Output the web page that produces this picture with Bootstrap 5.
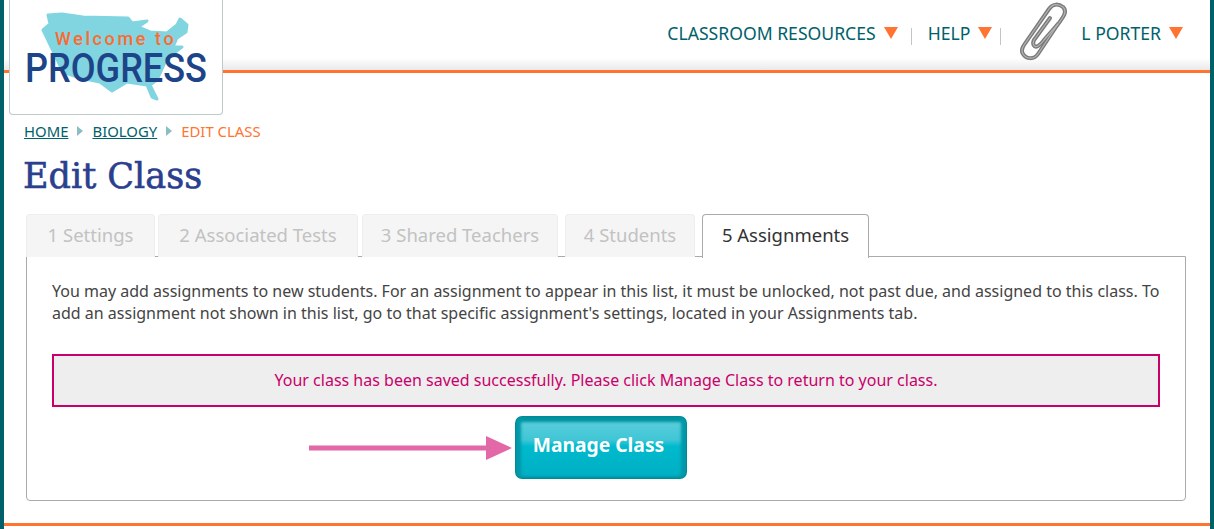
<!DOCTYPE html>
<html lang="en">
<head>
    <meta charset="UTF-8">
    <meta name="viewport" content="width=device-width, initial-scale=1.0">
    <title>Edit Class</title>
    <link href="https://cdn.jsdelivr.net/npm/bootstrap@5.3.0/dist/css/bootstrap.min.css" rel="stylesheet">
    <style>
        html, body { height: 529px; overflow: hidden; }
        body {
            background: #fff;
            font-family: "Noto Sans", "Open Sans", sans-serif;
            font-size: 16px;
            color: #444;
        }
        .page-frame {
            height: 529px;
            border-left: 4px solid #00616a;
            border-right: 4px solid #00616a;
            position: relative;
        }
        .top-bar {
            height: 73px;
            border-bottom: 3px solid #ff7431;
            background: linear-gradient(to bottom, #fff 0, #fff 58px, #e9e9e9 70px);
            padding: 0 27px 3px 0;
        }
        .top-link { color: #00616a; font-size: 17.6px; text-decoration: none; }
        .top-caret {
            width: 0; height: 0;
            margin: 0 13px 1px 8px;
            border-left: 7px solid transparent;
            border-right: 7px solid transparent;
            border-top: 12px solid #ff7431;
        }
        .top-caret.tight { margin-right: 8px; }
        .top-caret.last { margin-right: 0; }
        .top-sep { width: 1px; height: 17px; background: #c4c4c4; margin: 6px 16px 0 0; }
        .top-sep.before-clip { margin-right: 19px; }
        .clip-icon { margin-right: 14px; margin-bottom: 3px; }
        .logo-box {
            position: absolute;
            left: 5px; top: 0;
            width: 214px; height: 115px;
            background: #fff;
            border: 1px solid #bccaca;
            border-top: 0;
            border-radius: 0 0 4px 4px;
        }
        .crumb-row { padding: 48px 0 0 20px; font-size: 14.9px; line-height: 20px; gap: 9px; }
        .crumb-row a { color: #00616a; }
        .crumb-arrow {
            width: 0; height: 0;
            border-top: 5px solid transparent;
            border-bottom: 5px solid transparent;
            border-left: 6px solid #8bbec3;
        }
        .crumb-now { color: #ff7431; }
        .page-title {
            font-family: "DejaVu Serif", serif;
            font-size: 35px;
            line-height: 44px;
            color: #2a3f8d;
            margin: 13px 0 16px 19px;
            -webkit-text-stroke: 0.6px #2a3f8d;
        }
        .step-tabs { margin-left: 22px; margin-right: 24px; }
        .step-tab {
            height: 43px;
            line-height: 39px;
            font-size: 18.5px;
            text-align: center;
            background: #f5f5f5;
            color: #c2c2c2;
            border: 1px solid #eee;
            border-bottom: 0;
            border-radius: 4px 4px 0 0;
        }
        .step-tab:nth-child(1) { width: 129px; }
        .step-tab:nth-child(2) { width: 200px; margin-left: 3px; }
        .step-tab:nth-child(3) { width: 196px; margin-left: 4px; }
        .step-tab:nth-child(4) { width: 130px; margin-left: 7px; }
        .step-tab:nth-child(5) { width: 167px; margin-left: 7px; }
        .step-tab.is-on {
            background: #fff;
            color: #333;
            border-color: #aaa;
            position: relative;
            z-index: 1;
            margin-bottom: -1px;
            height: 44px;
        }
        .step-panel {
            margin: -1px 24px 0 22px;
            height: 245px;
            border: 1px solid #aaa;
            border-radius: 0 0 4px 4px;
            padding: 23px 25px 0 25px;
        }
        .step-panel p { line-height: 22px; margin: 0 0 30px; }
        .saved-note {
            height: 53px;
            line-height: 49px;
            text-align: center;
            background: #eee;
            border: 2px solid #c9006b;
            color: #c9006b;
        }
        .manage-row { margin: 9px 0 0 257px; }
        .manage-btn {
            width: 172px; height: 63px;
            font-size: 19.3px;
            font-weight: 700;
            color: #fff;
            border: 0;
            border-radius: 7px;
            background-image: linear-gradient(to bottom, #62d0dc 0, #3fc6d6 38%, #00bacd 48%, #00aec3 100%);
            box-shadow: inset 0 0 0 1px #008a96,
                inset 7px 0 3px -1px #0098a9,
                inset -7px 0 3px -1px #0098a9,
                inset 0 7px 3px -1px #00929f,
                inset 0 -3px 3px -1px #00899a;
            padding: 0 5px 4px 0;
        }
        .end-rule { height: 3px; background: #ff7431; margin-top: 22px; }
    </style>
</head>
<body>
    <div class="page-frame">
        <div class="top-bar d-flex justify-content-end align-items-center">
            <a class="top-link" href="#">CLASSROOM RESOURCES</a>
            <span class="top-caret"></span>
            <span class="top-sep"></span>
            <a class="top-link" href="#">HELP</a>
            <span class="top-caret tight"></span>
            <span class="top-sep before-clip"></span>
            <svg class="clip-icon" width="47" height="60" viewBox="0 0 47 60" fill="none" stroke-linecap="round" stroke-linejoin="round">
                <g stroke="#7b7b7b" stroke-width="4">
                    <path d="M38 22 L18 52 C14 58 6 57 3 52 C1 49 2 46 4 43 L29 7 C33 1 39 2 43 5 C46 8 45 12 43 15 L39 21"/>
                    <path d="M30 16 L14 38 C12 42 14 46 18 44 C20 43 22 41 24 38 L38 22"/>
                </g>
                <g stroke="#b4b4b4" stroke-width="1.2">
                    <path d="M38 22 L18 52 C14 58 6 57 3 52 C1 49 2 46 4 43 L29 7 C33 1 39 2 43 5 C46 8 45 12 43 15 L39 21"/>
                    <path d="M30 16 L14 38 C12 42 14 46 18 44 C20 43 22 41 24 38 L38 22"/>
                </g>
            </svg>
            <a class="top-link" href="#">L PORTER</a>
            <span class="top-caret last"></span>
        </div>

        <div class="logo-box">
            <svg width="212" height="113" viewBox="0 0 212 113">
                <path fill="#80d5e0" stroke="#80d5e0" stroke-width="3" stroke-linejoin="round" d="M38 15 L52 14 L73 17 L118 18 L122 23 L137 21 L128 27 L140 32 L157 33 L167 25 L170 19 L177 25 L176 32 L167 38 L163 47 L172 47 L157 58 L147 80 L140 85 L147 99 L142 97 L137 85 L117 82 L102 91 L90 82 L70 78 L53 72 L45 55 L33 30 L40 24 Z"/>
                <text x="45" y="45" font-family="Roboto, sans-serif" font-size="18" font-weight="500" letter-spacing="2.6" fill="#ff6a30">Welcome to</text>
                <text transform="translate(15 82) scale(0.88 1)" font-family="Roboto, sans-serif" font-size="41" font-weight="500" fill="#1d4488">PROGRESS</text>
            </svg>
        </div>

        <div class="crumb-row d-flex align-items-center">
            <a href="#">HOME</a><span class="crumb-arrow"></span>
            <a href="#">BIOLOGY</a><span class="crumb-arrow"></span>
            <span class="crumb-now">EDIT CLASS</span>
        </div>

        <h1 class="page-title">Edit Class</h1>

        <div class="step-tabs d-flex">
            <div class="step-tab">1 Settings</div>
            <div class="step-tab">2 Associated Tests</div>
            <div class="step-tab">3 Shared Teachers</div>
            <div class="step-tab">4 Students</div>
            <div class="step-tab is-on">5 Assignments</div>
        </div>
        <div class="step-panel">
            <p>You may add assignments to new students. For an assignment to appear in this list, it must be unlocked, not past due, and assigned to this class. To add an assignment not shown in this list, go to that specific assignment's settings, located in your Assignments tab.</p>
            <div class="saved-note">Your class has been saved successfully. Please click Manage Class to return to your class.</div>
            <div class="manage-row d-flex align-items-center">
                <svg width="206" height="26" viewBox="0 0 206 26">
                    <path fill="#e368a7" d="M0 10.5 H177 V1 L203 13 L177 25 V15.5 H0 Z"/>
                </svg>
                <button type="button" class="manage-btn">Manage Class</button>
            </div>
        </div>
        <div class="end-rule"></div>
    </div>
    <script src="https://cdn.jsdelivr.net/npm/bootstrap@5.3.0/dist/js/bootstrap.bundle.min.js"></script>
</body>
</html>
